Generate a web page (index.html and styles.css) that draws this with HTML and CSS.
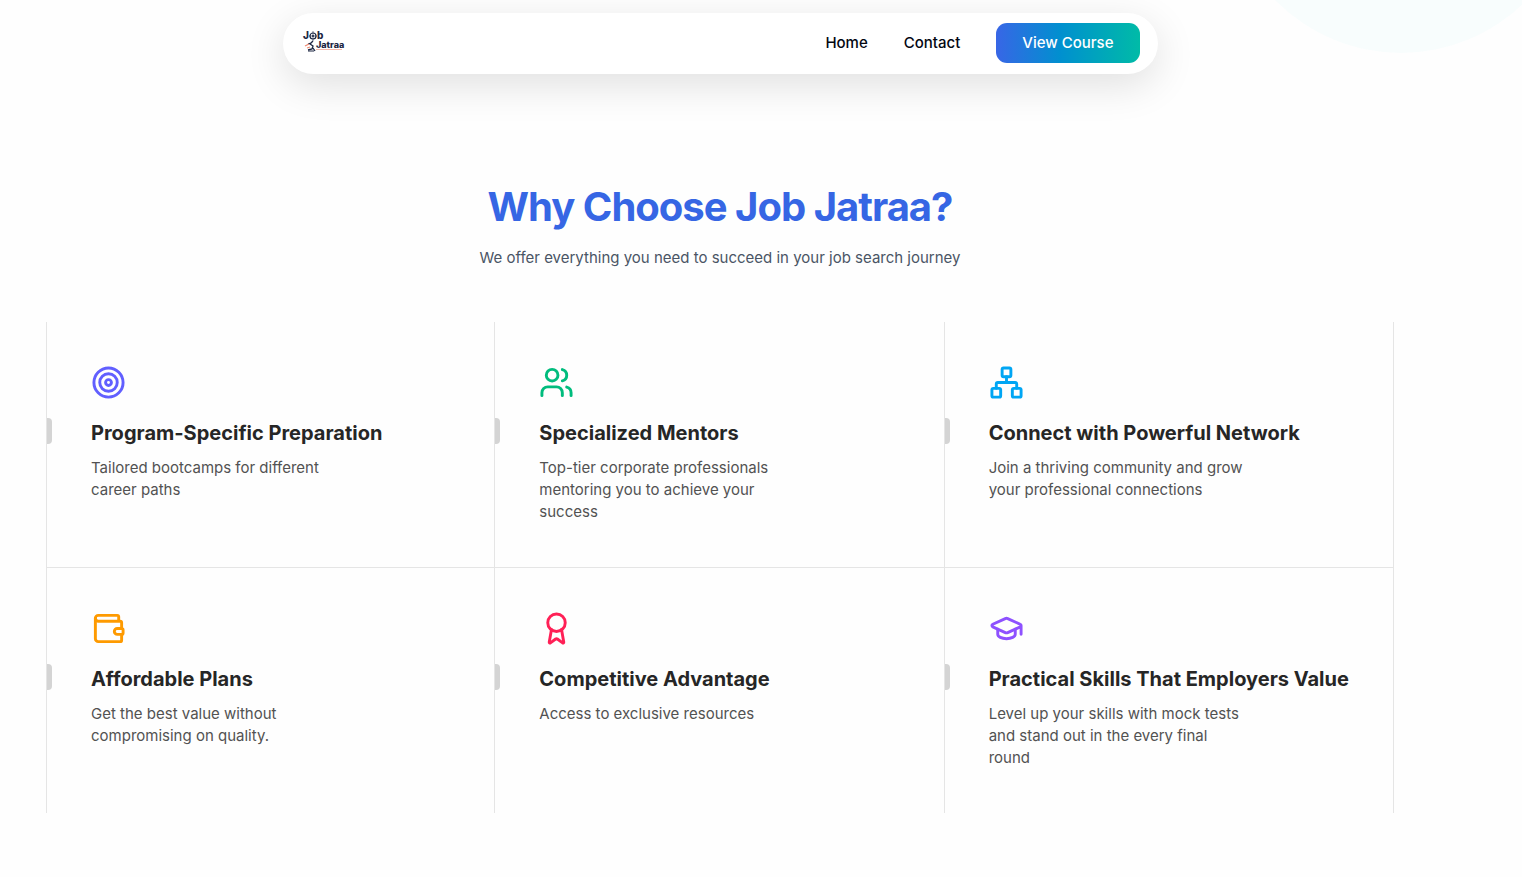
FILE: index.html
```html
<!DOCTYPE html>
<html lang="en">
<head>
<meta charset="utf-8">
<meta name="viewport" content="width=device-width, initial-scale=1">
<title>Job Jatraa</title>
<link rel="stylesheet" href="styles.css">
</head>
<body>
<div class="glow"></div>
<div class="page">
  <header class="navbar">
    <a class="logo" href="#" aria-label="Job Jatraa">
      <svg width="46" height="32" viewBox="0 -4 46 32">
        <text class="logo-text" x="2" y="8" font-size="10">J</text>
        <circle cx="12" cy="5" r="3" fill="none" stroke="#1c2742" stroke-width="1.200"/>
        <circle cx="12" cy="5" r="1" fill="#1c2742"/>
        <path d="M12 0v10M8 5h8" stroke="#1c2742" stroke-width=".6"/>
        <text class="logo-text" x="16" y="8" font-size="10">b</text>
        <text class="logo-text" x="15" y="17" font-size="9">Jatraa</text>
        <path d="M12 10l-3 3 3 2-1 3-4 1M7 13l3-1M12 17l2 3" fill="none" stroke="#1c2742" stroke-width="1.300"/>
        <path d="M4 15l4-2M6 17l3-1" stroke="#ee8a72" stroke-width="1.300"/>
        <path d="M7 20h6" stroke="#1c2742" stroke-width="1"/>
        <path d="M15 18.500h26" stroke="#f2a796" stroke-width=".8"/>
      </svg>
    </a>
    <nav class="nav">
      <a class="nav-link" href="#">Home</a>
      <a class="nav-link" href="#">Contact</a>
      <button class="cta" type="button">View Course</button>
    </nav>
  </header>
  <main class="features">
    <h1 class="heading">Why Choose Job Jatraa?</h1>
    <p class="lead">We offer everything you need to succeed in your job search journey</p>
    <div class="grid">
      <article class="card">
        <svg class="icon indigo" viewBox="0 0 24 24"><circle cx="12" cy="12" r="10"/><circle cx="12" cy="12" r="6"/><circle cx="12" cy="12" r="2"/></svg>
        <h2 class="title">Program-Specific Preparation</h2>
        <p class="text">Tailored bootcamps for different career paths</p>
      </article>
      <article class="card">
        <svg class="icon emerald" viewBox="0 0 24 24"><path d="M16 21v-2a4 4 0 0 0-4-4H6a4 4 0 0 0-4 4v2"/><circle cx="9" cy="7" r="4"/><path d="M22 21v-2a4 4 0 0 0-3-3.870M16 3.130a4 4 0 0 1 0 7.750"/></svg>
        <h2 class="title">Specialized Mentors</h2>
        <p class="text">Top-tier corporate professionals mentoring you to achieve your success</p>
      </article>
      <article class="card">
        <svg class="icon sky" viewBox="0 0 24 24"><rect x="16" y="16" width="6" height="6" rx="1"/><rect x="2" y="16" width="6" height="6" rx="1"/><rect x="9" y="2" width="6" height="6" rx="1"/><path d="M5 16v-3a1 1 0 0 1 1-1h12a1 1 0 0 1 1 1v3M12 12V8"/></svg>
        <h2 class="title">Connect with Powerful Network</h2>
        <p class="text">Join a thriving community and grow your professional connections</p>
      </article>
      <article class="card">
        <svg class="icon amber" viewBox="0 0 24 24"><path d="M19 7V4a1 1 0 0 0-1-1H5a2 2 0 0 0 0 4h15a1 1 0 0 1 1 1v4h-3a2 2 0 0 0 0 4h3a1 1 0 0 0 1-1v-2a1 1 0 0 0-1-1"/><path d="M3 5v14a2 2 0 0 0 2 2h15a1 1 0 0 0 1-1v-4"/></svg>
        <h2 class="title">Affordable Plans</h2>
        <p class="text">Get the best value without compromising on quality.</p>
      </article>
      <article class="card">
        <svg class="icon rose" viewBox="0 0 24 24"><path d="m15.477 12.890 1.515 8.526a.5.5 0 0 1-.81.47l-3.580-2.687a1 1 0 0 0-1.197 0l-3.586 2.686a.5.5 0 0 1-.81-.469l1.514-8.526"/><circle cx="12" cy="8" r="6"/></svg>
        <h2 class="title">Competitive Advantage</h2>
        <p class="text">Access to exclusive resources</p>
      </article>
      <article class="card">
        <svg class="icon violet" viewBox="0 0 24 24"><path d="M21.420 10.922a1 1 0 0 0-.019-1.838L12.830 5.180a2 2 0 0 0-1.660 0L2.600 9.080a1 1 0 0 0 0 1.832l8.570 3.908a2 2 0 0 0 1.660 0zM22 10v6"/><path d="M6 12.500V16a6 3 0 0 0 12 0v-3.500"/></svg>
        <h2 class="title">Practical Skills That Employers Value</h2>
        <p class="text">Level up your skills with mock tests and stand out in the every final round</p>
      </article>
    </div>
  </main>
</div>
</body>
</html>
```
FILE: styles.css
```css
* { box-sizing: border-box; }

body {
  margin: 0;
  background: #fefefe;
  font-family: Inter, "Liberation Sans", sans-serif;
  font-size: 15px;
  line-height: 22px;
  overflow-x: hidden;
}

h1, h2, p { margin: 0; }

/* Decorative disc behind the top right corner */
.glow {
  position: absolute;
  top: -299px;
  right: -55px;
  width: 352px;
  height: 352px;
  border-radius: 50%;
  background: #f8fdfd;
}

.page {
  position: relative;
  padding: 13px 128px 64px 46px;
}

.navbar {
  display: flex;
  align-items: center;
  justify-content: space-between;
  max-width: 875px;
  margin: 0 auto;
  padding: 10px 18px 11px;
  border-radius: 31px;
  background: #fff;
  box-shadow: 0 11px 40px rgba(0, 0, 0, 0.12);
}

.logo svg { display: block; }
.logo-text { font-weight: 800; fill: #1c2742; }

.nav {
  display: flex;
  align-items: center;
  gap: 36px;
}

.nav-link {
  color: #030712;
  font-weight: 500;
  text-decoration: none;
}

.cta {
  padding: 9px 26px;
  border: 0;
  border-radius: 11px;
  background: linear-gradient(90deg, #3866e6, #0090cf 45%, #00bba7);
  color: #fff;
  font: inherit;
  font-weight: 500;
}

.features { padding-top: 109px; }

.heading {
  color: #3666e4;
  font-size: 40px;
  font-weight: 700;
  line-height: 48px;
  letter-spacing: -1px;
  text-align: center;
}

.lead {
  margin-top: 16px;
  color: #4a5565;
  text-align: center;
}

.grid {
  display: grid;
  grid-template-columns: repeat(3, 1fr);
  margin-top: 53px;
}

.card {
  padding: 43px 44px 44px;
  border-right: 1px solid #e5e5e5;
}

.card:nth-child(3n+1) { border-left: 1px solid #e5e5e5; }
.card:nth-child(-n+3) { border-bottom: 1px solid #e5e5e5; }

.icon {
  display: block;
  width: 35px;
  height: 35px;
  fill: none;
  stroke: currentColor;
  stroke-width: 2;
  stroke-linecap: round;
  stroke-linejoin: round;
}

.indigo { color: #615fff; }
.emerald { color: #00bc7d; }
.sky { color: #00a6f4; }
.amber { color: #fe9a00; }
.rose { color: #ff2056; }
.violet { color: #8e51ff; }

.title {
  position: relative;
  margin-top: 18px;
  color: #262626;
  font-size: 20px;
  font-weight: 700;
  line-height: 30px;
  white-space: nowrap;
}

/* Accent tab on the left edge of the card */
.title::before {
  content: "";
  position: absolute;
  top: 0;
  left: -44px;
  width: 5px;
  height: 26px;
  border-radius: 0 4px 4px 0;
  background: #d4d4d4;
}

.text {
  max-width: 264px;
  margin-top: 9px;
  color: #525252;
}
```
